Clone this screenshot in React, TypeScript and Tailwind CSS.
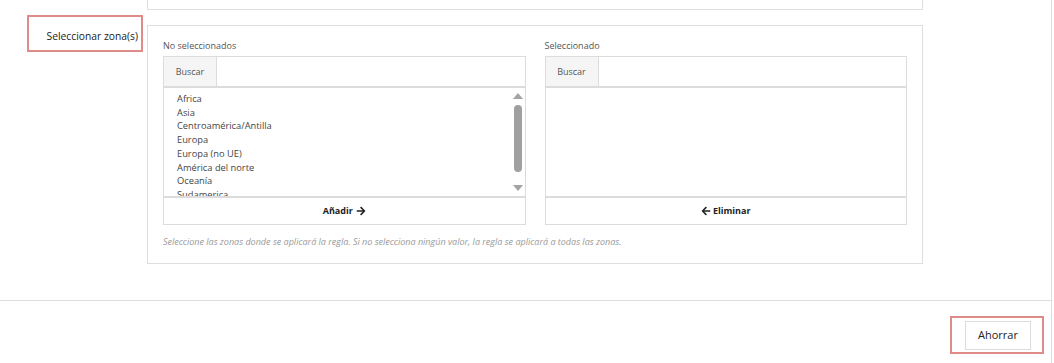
import { FaArrowLeft, FaArrowRight } from "react-icons/fa";

const zonas = [
  "Africa",
  "Asia",
  "Centroamérica/Antilla",
  "Europa",
  "Europa (no UE)",
  "América del norte",
  "Oceanía",
  "Sudamerica",
];

function SearchRow() {
  return (
    <div className="flex h-[30px] border border-[#dcdcdc] border-b-0">
      <div className="w-[53px] flex items-center justify-center bg-[#f5f5f5] border-r border-[#dcdcdc] text-[9px] text-[#555]">
        Buscar
      </div>
      <div className="flex-1 bg-white" />
    </div>
  );
}

function Scrollbar() {
  return (
    <div className="w-[13px] flex flex-col items-center pt-[5px] pb-[5px]">
      <div className="w-0 h-0 border-l-[5px] border-r-[5px] border-b-[6px] border-l-transparent border-r-transparent border-b-[#a3a3a3]" />
      <div className="mt-[6px] w-[8px] h-[67px] rounded-full bg-[#a0a0a0]" />
      <div className="flex-1" />
      <div className="w-0 h-0 border-l-[5px] border-r-[5px] border-t-[6px] border-l-transparent border-r-transparent border-t-[#a3a3a3]" />
    </div>
  );
}

export default function App() {
  return (
    <div
      className="w-[1052px] h-[363px] bg-white border-r border-[#dedede] flex flex-col text-[#333]"
      style={{ fontFamily: '"Open Sans", "Liberation Sans", sans-serif' }}
    >
      <div className="flex">
        <div className="w-[147px] shrink-0">
          <div className="ml-[27px] mt-[15px] w-[116px] h-[37px] border-2 border-[#e08a8a] flex items-center justify-end pr-[3px] pt-[6px] text-[10.3px] text-[#222]">
            Seleccionar zona(s)
          </div>
        </div>
        <div className="w-[776px] flex flex-col">
          <div className="h-[10px] border border-t-0 border-[#dedede]" />
          <div className="mt-[15px] h-[239px] border border-[#dedede] px-[15px] pt-[14px]">
            <div className="grid grid-cols-2 gap-[19px]">
              <div className="flex flex-col">
                <div className="h-[16px] text-[9px] text-[#555] leading-[12px]">No seleccionados</div>
                <SearchRow />
                <div className="h-[112px] flex border-2 border-[#dcdcdc] border-l border-r">
                  <div className="flex-1 overflow-hidden pl-[13px] pt-[4px] text-[9.3px] leading-[13.7px] text-[#444]">
                    {zonas.map((z) => (
                      <div key={z}>{z}</div>
                    ))}
                  </div>
                  <Scrollbar />
                </div>
                <button className="h-[27px] border border-t-0 border-[#dcdcdc] flex items-center justify-center gap-[3px] text-[9px] font-bold text-[#222] bg-white">
                  Añadir <FaArrowRight className="w-[10px] h-[10px]" />
                </button>
              </div>
              <div className="flex flex-col">
                <div className="h-[16px] text-[9px] text-[#555] leading-[12px]">Seleccionado</div>
                <SearchRow />
                <div className="h-[112px] border-2 border-[#dcdcdc] border-l border-r" />
                <button className="h-[27px] border border-t-0 border-[#dcdcdc] flex items-center justify-center gap-[2px] text-[9px] font-bold text-[#222] bg-white">
                  <FaArrowLeft className="w-[10px] h-[10px]" /> Eliminar
                </button>
              </div>
            </div>
            <p className="mt-[10px] text-[9px] italic text-[#999]">
              Seleccione las zonas donde se aplicará la regla. Si no selecciona ningún valor, la regla se aplicará a todas las zonas.
            </p>
          </div>
        </div>
      </div>
      <div className="mt-[36px] border-t border-[#dedede] flex justify-end pr-[7px] pt-[15px]">
        <div className="w-[94px] h-[38px] border-2 border-[#e08a8a] flex items-center justify-center pl-[2px]">
          <button className="w-[66px] h-[29px] border border-[#dcdcdc] bg-white text-[11px] text-[#222]">
            Ahorrar
          </button>
        </div>
      </div>
    </div>
  );
}
